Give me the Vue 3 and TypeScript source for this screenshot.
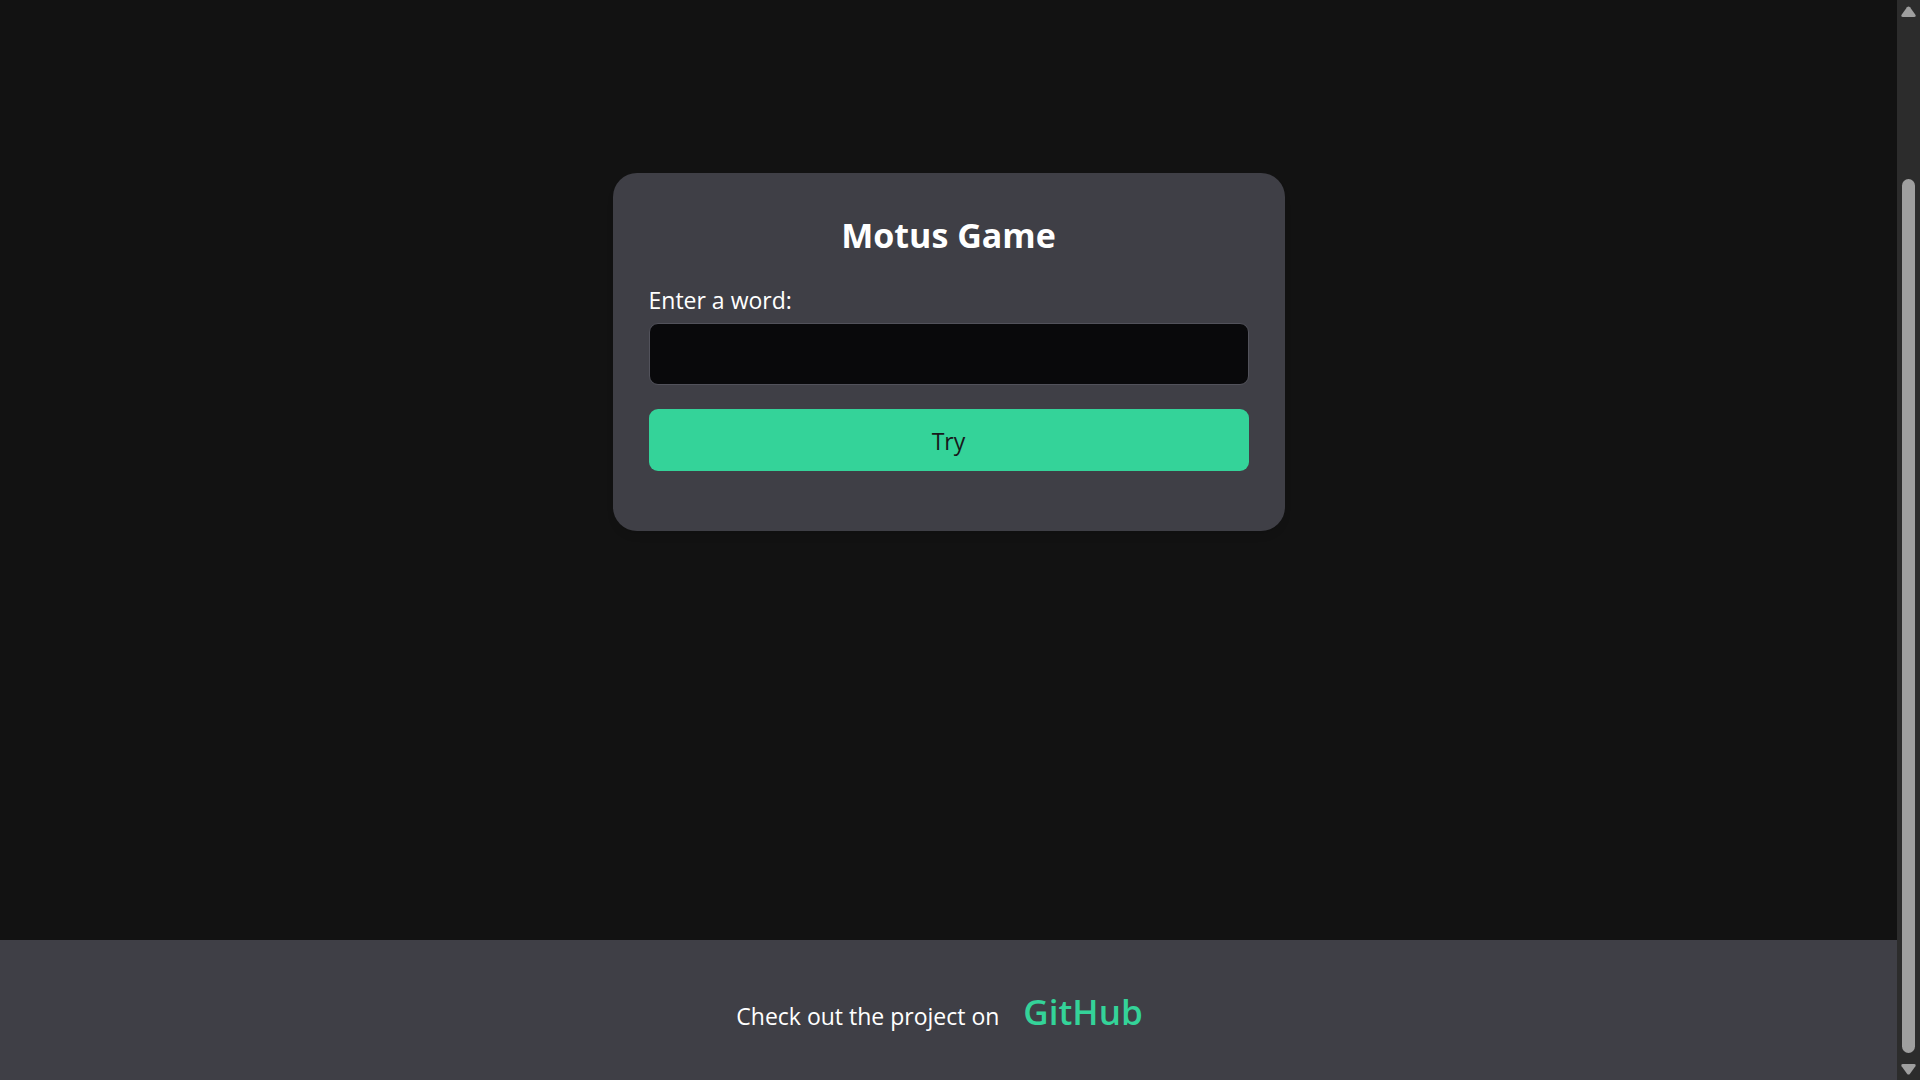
<script setup lang="ts">
import { ref } from 'vue'

const word = ref<string>('')

function tryWord(): void {
  word.value = ''
}
</script>

<template>
  <div class="window">
    <div class="page">
      <main class="content">
        <form class="card" @submit.prevent="tryWord">
          <h1 class="title">Motus Game</h1>
          <label class="label" for="word">Enter a word:</label>
          <input id="word" v-model="word" class="field" type="text" autocomplete="off" />
          <button class="submit" type="submit">Try</button>
        </form>
      </main>
      <footer class="footer">
        <p class="credit">Check out the project on <a class="link" href="#">GitHub</a></p>
      </footer>
    </div>
    <div class="scrollbar" aria-hidden="true">
      <svg class="arrow" viewBox="0 0 15 12" width="15" height="12">
        <path d="M6 1.3Q7.5-.5 9 1.3L14.4 8.8Q15.4 11 13 11H2Q-.4 11 .6 8.8Z" />
      </svg>
      <div class="thumb"></div>
      <svg class="arrow" viewBox="0 0 15 12" width="15" height="12">
        <path d="M6 10.7Q7.5 12.5 9 10.7L14.4 3.2Q15.4 1 13 1H2Q-.4 1 .6 3.2Z" />
      </svg>
    </div>
  </div>
</template>

<style>
body {
  margin: 0;
  background: #121212;
}
</style>

<style scoped>
.window {
  display: flex;
  min-height: 100vh;
  color: #fff;
  background: #121212;
  font-family: "Segoe UI", "Open Sans", "Noto Sans", sans-serif;
  font-size: 23px;
  line-height: 36px;
}

.page {
  display: flex;
  flex: 1;
  flex-direction: column;
}

.content {
  display: flex;
  flex: 1;
  align-items: flex-start;
  justify-content: center;
  padding: 173px 24px 24px;
}

.card {
  display: flex;
  flex-direction: column;
  box-sizing: border-box;
  width: 100%;
  max-width: 672px;
  padding: 36px 36px 60px;
  border-radius: 24px;
  background: #3f3f46;
  box-shadow: 0 6px 9px -2px rgba(0, 0, 0, 0.1);
}

.title {
  margin: 0 0 20px;
  font-size: 34px;
  font-weight: 700;
  line-height: 53px;
  text-align: center;
}

.label {
  margin-bottom: 5px;
}

.field,
.submit {
  box-sizing: border-box;
  width: 100%;
  height: 62px;
  border-radius: 9px;
  font: inherit;
}

.field {
  margin: 0 0 24px;
  padding: 0 18px;
  border: 1px solid #52525b;
  color: #fff;
  background: #09090b;
}

.submit {
  padding: 2px 18px 0;
  border: 0;
  color: #18181b;
  background: #34d399;
  font-weight: 500;
  cursor: pointer;
}

.footer {
  box-sizing: border-box;
  height: 140px;
  padding: 45px 36px 36px;
  background: #3f3f46;
  text-align: center;
}

.credit {
  margin: 0;
  line-height: 54px;
}

.link {
  padding: 0 18px;
  color: #34d399;
  font-size: 35px;
  font-weight: 600;
  text-decoration: none;
}

.scrollbar {
  display: flex;
  flex-direction: column;
  align-items: center;
  box-sizing: border-box;
  width: 23px;
  padding: 6px 0 5px;
  background: #2c2c2c;
}

.arrow {
  fill: #9f9f9f;
}

.thumb {
  flex: 1;
  width: 13px;
  margin: 161px 0 10px;
  border-radius: 7px;
  background: #9f9f9f;
}
</style>
